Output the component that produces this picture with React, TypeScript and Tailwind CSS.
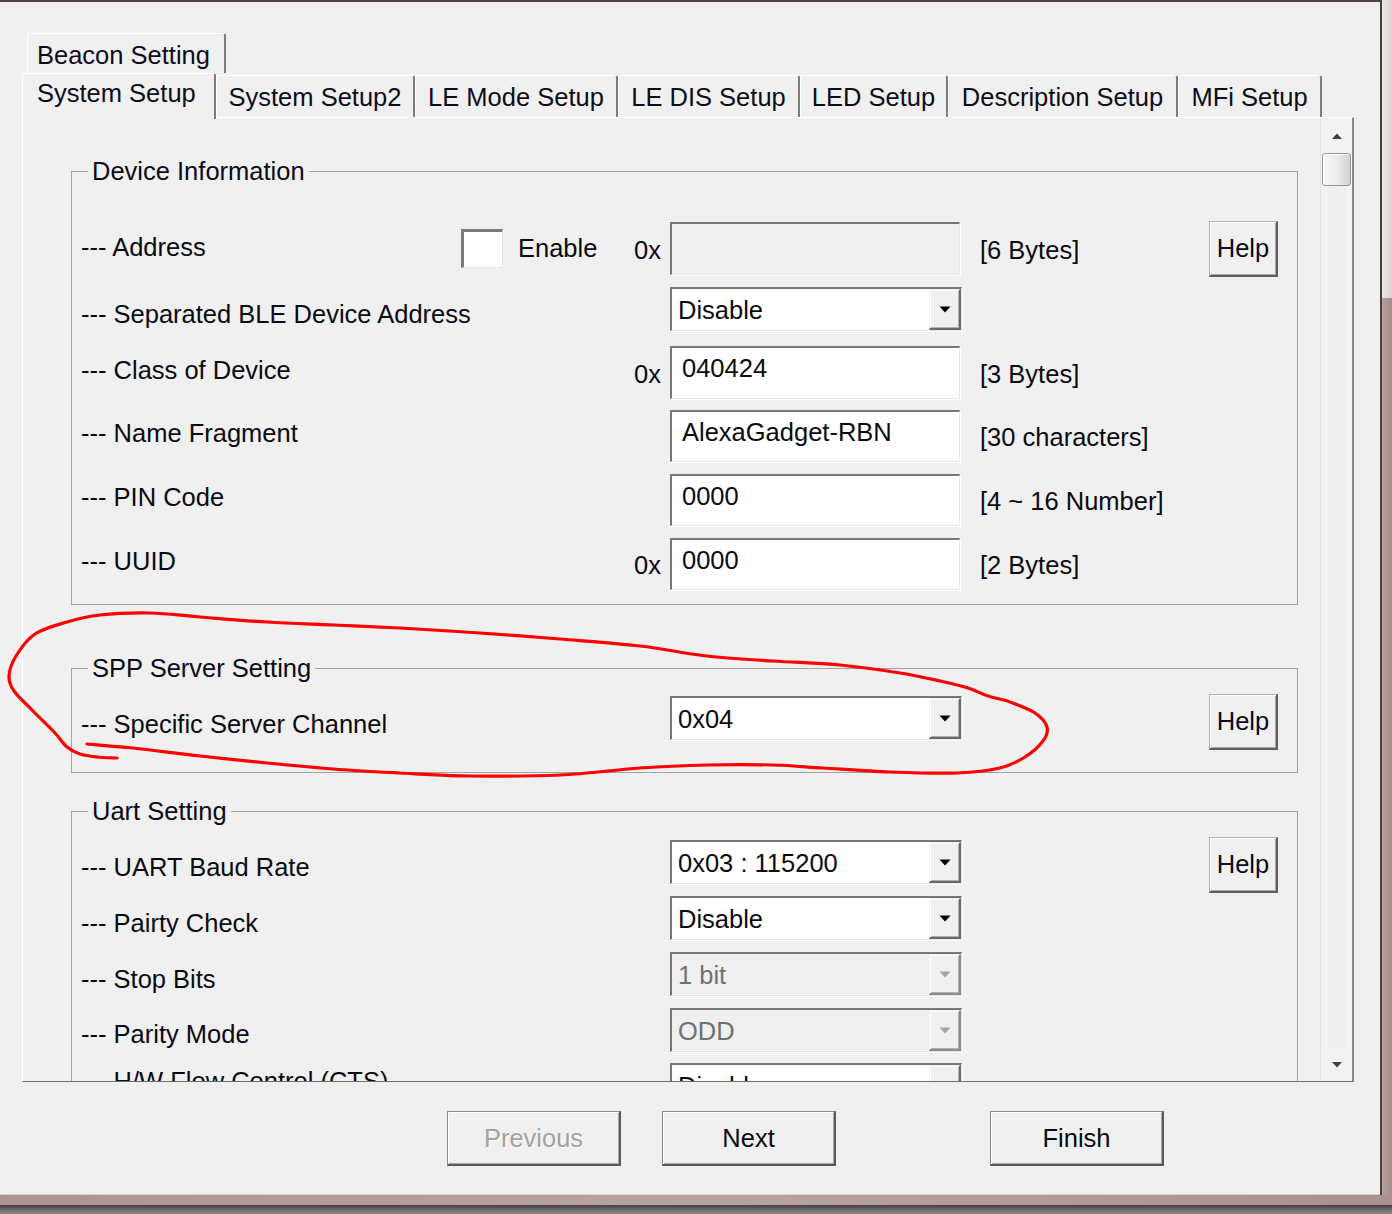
import React from "react";

const sunken =
  "border-t-2 border-l-2 border-b border-r border-t-[#767676] border-l-[#767676] border-b-[#e6e6e6] border-r-[#e6e6e6] shadow-[1px_1px_0_#ffffff]";

const raisedSmall =
  "bg-[#f0f0f0] border-t border-l border-b-2 border-r-2 border-t-[#b4b4b4] border-l-[#b4b4b4] border-b-[#5e5e5e] border-r-[#5e5e5e] shadow-[inset_1px_1px_0_#ffffff,inset_-1px_-1px_0_#a8a8a8]";

const raisedBig =
  "bg-[#f0f0f0] border-t border-l border-b-2 border-r-2 border-t-[#8c8c8c] border-l-[#8c8c8c] border-b-[#5a5a5a] border-r-[#5a5a5a] shadow-[inset_1px_1px_0_#ffffff,inset_-1px_-1px_0_#a8a8a8]";

function Arrow({ color }: { color: string }) {
  return (
    <svg width="12" height="7" viewBox="0 0 12 7">
      <path d="M0.5 0.5 H11.5 L6 6.5 Z" fill={color} />
    </svg>
  );
}

function Dropdown({ value, disabled }: { value: string; disabled?: boolean }) {
  return (
    <div
      className={`flex h-[44px] w-[292px] ${sunken} ${disabled ? "bg-[#f0f0f0]" : "bg-white"}`}
    >
      <div
        className={`flex-1 flex items-center pl-[6px] leading-[30px] whitespace-nowrap ${
          disabled ? "text-[#707070]" : "text-[#0a0a10]"
        }`}
      >
        {value}
      </div>
      <div
        className={`w-[32px] h-full flex items-center justify-center border-t border-l border-b-2 border-r-2 border-t-[#f0f0f0] border-l-[#f0f0f0] ${
          disabled
            ? "bg-[#f0f0f0] border-b-[#8a8a8a] border-r-[#8a8a8a]"
            : "bg-[#f0f0f0] border-b-[#6a6a6a] border-r-[#6a6a6a]"
        } shadow-[inset_1px_1px_0_#ffffff,inset_-1px_-1px_0_#b0b0b0]`}
      >
        <Arrow color={disabled ? "#a3a3a3" : "#000000"} />
      </div>
    </div>
  );
}

function TextBox({ value, disabled }: { value?: string; disabled?: boolean }) {
  return (
    <div
      className={`w-[290px] h-full ${sunken} ${
        disabled ? "bg-[#f0f0f0]" : "bg-white"
      } pl-[10px] pt-[5px] leading-[30px] text-[#0a0a10] whitespace-nowrap`}
    >
      {value}
    </div>
  );
}

function HelpButton() {
  return (
    <div
      className={`w-[69px] h-[56px] flex items-center justify-center ${raisedSmall} text-[#0a0a18]`}
    >
      Help
    </div>
  );
}

function Group({
  title,
  className,
  children,
}: {
  title: string;
  className: string;
  children: React.ReactNode;
}) {
  return (
    <fieldset className={`ml-[48px] w-[1227px] shrink-0 border border-[#a3a3a3] ${className}`}>
      <legend className="ml-[16px] px-[4px] leading-[30px] text-[#0a0a18]">{title}</legend>
      {children}
    </fieldset>
  );
}

const tabBase =
  "flex items-center justify-center bg-[#f0f0f0] border-t border-l border-r-2 border-t-white border-l-white border-r-[#7c7c7c] rounded-t-[3px] text-[#0c0c1a] leading-[30px] whitespace-nowrap";

const tabs: { label: string; w: string }[] = [
  { label: "System Setup2", w: "w-[199px]" },
  { label: "LE Mode Setup", w: "w-[203px]" },
  { label: "LE DIS Setup", w: "w-[182px]" },
  { label: "LED Setup", w: "w-[148px]" },
  { label: "Description Setup", w: "w-[230px]" },
  { label: "MFi Setup", w: "w-[144px]" },
];

const redPts: [number, number][] = [
  [87, 744], [133, 748], [200, 756], [267, 763], [333, 769], [400, 773], [470, 776],
  [560, 775], [640, 768], [707, 765], [773, 765], [823, 768], [890, 772], [957, 773],
  [1000, 768], [1025, 757], [1043, 741], [1047, 727], [1035, 713], [1010, 702],
  [988, 696], [968, 688], [940, 681], [900, 673], [840, 665], [773, 661], [707, 656],
  [640, 646], [560, 639], [480, 633], [400, 628], [333, 625], [267, 622], [200, 617],
  [150, 613], [100, 615], [67, 622], [35, 634], [16, 656], [9, 676], [14, 691],
  [33, 711], [55, 733], [67, 747], [80, 754], [97, 757], [117, 758],
];

function smoothPath(p: [number, number][]) {
  const f = (n: number) => n.toFixed(1);
  let d = `M${f(p[0][0])} ${f(p[0][1])}`;
  for (let i = 0; i < p.length - 1; i++) {
    const p0 = p[i - 1] || p[i];
    const p1 = p[i];
    const p2 = p[i + 1];
    const p3 = p[i + 2] || p2;
    const c1x = p1[0] + (p2[0] - p0[0]) / 6;
    const c1y = p1[1] + (p2[1] - p0[1]) / 6;
    const c2x = p2[0] - (p3[0] - p1[0]) / 6;
    const c2y = p2[1] - (p3[1] - p1[1]) / 6;
    d += ` C${f(c1x)} ${f(c1y)} ${f(c2x)} ${f(c2y)} ${f(p2[0])} ${f(p2[1])}`;
  }
  return d;
}

export default function App() {
  return (
    <div className="relative w-[1392px] h-[1214px] overflow-hidden flex flex-col bg-[#5a5a5a] font-['Liberation_Sans',Arial,sans-serif] text-[25.5px] text-[#0a0a10]">
      <div className="flex h-[1195px] shrink-0">
        {/* window */}
        <div className="w-[1380px] h-full bg-[#f0f0f0] flex flex-col border-b border-b-[#d9d2d0]">
          <div className="h-[2px] bg-[#4d4444] shrink-0" />

          {/* tab row 1 */}
          <div className="flex pl-[27px] pt-[31px] shrink-0">
            <div className={`${tabBase} w-[199px] h-[40px] pt-[3px] !justify-start pl-[9px]`}>Beacon Setting</div>
          </div>

          {/* tab row 2 */}
          <div className="relative z-10 flex items-end pl-[22px] h-[46px] -mb-[2px] shrink-0">
            <div
              className={`flex items-start justify-start bg-[#f0f0f0] border-t border-l border-r-2 border-t-white border-l-white border-r-[#7c7c7c] rounded-t-[3px] text-[#0c0c1a] leading-[30px] whitespace-nowrap w-[194px] h-[46px] pl-[14px] pt-[4px]`}
            >
              System Setup
            </div>
            {tabs.map((t) => (
              <div key={t.label} className={`${tabBase} ${t.w} h-[42px] mb-[2px]`}>
                {t.label}
              </div>
            ))}
          </div>

          {/* panel */}
          <div className="ml-[22px] w-[1332px] h-[965px] shrink-0 flex border-t border-l border-r-2 border-b border-t-white border-l-white border-r-[#8a8a8a] border-b-[#6c6c6c]">
            <div className="w-[1297px] h-[963px] overflow-hidden flex flex-col">
              {/* Device Information */}
              <Group title="Device Information" className="mt-[38px] pb-[14px]">
                <div className="flex items-start h-[56px] mt-[35px] pl-[9px]">
                  <div className="w-[553px] flex items-start">
                    <div className="w-[380px] mt-[11px] leading-[30px] whitespace-nowrap">--- Address</div>
                    <div className={`w-[42px] h-[39px] mt-[8px] bg-white border-t-[3px] border-l-[3px] border-b border-r border-t-[#7a7a7a] border-l-[#7a7a7a] border-b-[#e3e3e3] border-r-[#e3e3e3]`} />
                    <div className="ml-[15px] mt-[12px] leading-[30px]">Enable</div>
                  </div>
                  <div className="w-[36px] mt-[14px] leading-[30px]">0x</div>
                  <div className="w-[292px] h-[53px] mt-[1px]">
                    <TextBox disabled />
                  </div>
                  <div className="w-[247px] pl-[18px] mt-[14px] leading-[30px]">[6 Bytes]</div>
                  <HelpButton />
                </div>

                <div className="flex items-start h-[44px] mt-[10px] pl-[9px]">
                  <div className="w-[553px] mt-[12px] leading-[30px] whitespace-nowrap">
                    --- Separated BLE Device Address
                  </div>
                  <div className="w-[36px]" />
                  <Dropdown value="Disable" />
                </div>

                <div className="flex items-start h-[53px] mt-[15px] pl-[9px]">
                  <div className="w-[553px] mt-[9px] leading-[30px] whitespace-nowrap">--- Class of Device</div>
                  <div className="w-[36px] mt-[13px] leading-[30px]">0x</div>
                  <div className="w-[292px] h-[53px]">
                    <TextBox value="040424" />
                  </div>
                  <div className="w-[247px] pl-[18px] mt-[13px] leading-[30px]">[3 Bytes]</div>
                </div>

                <div className="flex items-start h-[52px] mt-[11px] pl-[9px]">
                  <div className="w-[553px] mt-[8px] leading-[30px] whitespace-nowrap">--- Name Fragment</div>
                  <div className="w-[36px]" />
                  <div className="w-[292px] h-[52px]">
                    <TextBox value="AlexaGadget-RBN" />
                  </div>
                  <div className="w-[247px] pl-[18px] mt-[12px] leading-[30px] whitespace-nowrap">[30 characters]</div>
                </div>

                <div className="flex items-start h-[52px] mt-[12px] pl-[9px]">
                  <div className="w-[553px] mt-[8px] leading-[30px] whitespace-nowrap">--- PIN Code</div>
                  <div className="w-[36px]" />
                  <div className="w-[292px] h-[52px]">
                    <TextBox value="0000" />
                  </div>
                  <div className="w-[247px] pl-[18px] mt-[12px] leading-[30px] whitespace-nowrap">[4 ~ 16 Number]</div>
                </div>

                <div className="flex items-start h-[52px] mt-[12px] pl-[9px]">
                  <div className="w-[553px] mt-[8px] leading-[30px] whitespace-nowrap">--- UUID</div>
                  <div className="w-[36px] mt-[12px] leading-[30px]">0x</div>
                  <div className="w-[292px] h-[52px]">
                    <TextBox value="0000" />
                  </div>
                  <div className="w-[247px] pl-[18px] mt-[12px] leading-[30px]">[2 Bytes]</div>
                </div>
              </Group>

              {/* SPP Server Setting */}
              <Group title="SPP Server Setting" className="mt-[48px] pb-[22px]">
                <div className="flex items-start h-[56px] mt-[11px] pl-[9px]">
                  <div className="w-[553px] mt-[15px] leading-[30px] whitespace-nowrap">
                    --- Specific Server Channel
                  </div>
                  <div className="w-[36px]" />
                  <div className="w-[292px] mt-[2px]">
                    <Dropdown value="0x04" />
                  </div>
                  <div className="w-[247px]" />
                  <HelpButton />
                </div>
              </Group>

              {/* Uart Setting */}
              <Group title="Uart Setting" className="mt-[23px] pb-[20px]">
                <div className="flex items-start h-[56px] mt-[11px] pl-[9px]">
                  <div className="w-[553px] mt-[15px] leading-[30px] whitespace-nowrap">--- UART Baud Rate</div>
                  <div className="w-[36px]" />
                  <div className="w-[292px] mt-[3px]">
                    <Dropdown value="0x03 : 115200" />
                  </div>
                  <div className="w-[247px]" />
                  <HelpButton />
                </div>
                <div className="flex items-start h-[44px] mt-[3px] pl-[9px]">
                  <div className="w-[553px] mt-[12px] leading-[30px] whitespace-nowrap">--- Pairty Check</div>
                  <div className="w-[36px]" />
                  <Dropdown value="Disable" />
                </div>
                <div className="flex items-start h-[44px] mt-[12px] pl-[9px]">
                  <div className="w-[553px] mt-[12px] leading-[30px] whitespace-nowrap">--- Stop Bits</div>
                  <div className="w-[36px]" />
                  <Dropdown value="1 bit" disabled />
                </div>
                <div className="flex items-start h-[44px] mt-[12px] pl-[9px]">
                  <div className="w-[553px] mt-[11px] leading-[30px] whitespace-nowrap">--- Parity Mode</div>
                  <div className="w-[36px]" />
                  <Dropdown value="ODD" disabled />
                </div>
                <div className="flex items-start h-[44px] mt-[11px] pl-[9px]">
                  <div className="w-[553px] mt-[3px] leading-[30px] whitespace-nowrap">--- H/W Flow Control (CTS)</div>
                  <div className="w-[36px]" />
                  <Dropdown value="Disable" />
                </div>
              </Group>
            </div>

            {/* scrollbar */}
            <div className="w-[32px] h-[963px] flex flex-col bg-[#f2f2f2] border-l border-l-[#e2e2e2]">
              <div className="h-[35px] flex items-center justify-center shrink-0">
                <svg width="10" height="6" viewBox="0 0 10 6">
                  <path d="M0 6 L5 0.5 L10 6 Z" fill="#404040" />
                </svg>
              </div>
              <div className="mx-[1px] h-[33px] shrink-0 rounded-[3px] border border-[#979797] bg-gradient-to-r from-[#f7f7f7] via-[#ececec] to-[#d2d2d2] shadow-[inset_1px_1px_0_#ffffff]" />
              <div className="flex-1 flex justify-center">
                <div className="w-[22px] h-full border-l border-r border-[#f8f8f8] bg-[#efefef]" />
              </div>
              <div className="h-[32px] flex items-center justify-center shrink-0">
                <svg width="10" height="6" viewBox="0 0 10 6">
                  <path d="M0 0 L10 0 L5 5.5 Z" fill="#404040" />
                </svg>
              </div>
            </div>
          </div>

          {/* bottom buttons */}
          <div className="flex pl-[447px] mt-[29px] shrink-0">
            <div
              className={`w-[174px] h-[55px] flex items-center justify-center ${raisedBig} text-[#a2a2a2] [text-shadow:1px_1px_0_#ffffff]`}
            >
              Previous
            </div>
            <div className={`ml-[41px] w-[174px] h-[55px] flex items-center justify-center ${raisedBig}`}>
              Next
            </div>
            <div className={`ml-[154px] w-[174px] h-[55px] flex items-center justify-center ${raisedBig}`}>
              Finish
            </div>
          </div>
        </div>

        {/* right frame */}
        <div className="w-[2px] h-full bg-[#4a3f3f]" />
        <div className="flex-1 h-full flex flex-col">
          <div className="h-[298px] bg-gradient-to-r from-[#ebe6e6] to-[#ddd3d2]" />
          <div className="flex-1 bg-gradient-to-r from-[#b7a19c] to-[#a38e89]" />
        </div>
      </div>

      {/* bottom frame */}
      <div className="h-[10px] shrink-0 bg-gradient-to-r from-[#ad9690] via-[#b9a39e] to-[#aa938d]" />
      <div className="flex-1 bg-gradient-to-b from-[#3e3e3e] via-[#6a6a6a] to-[#8c8c8c]" />

      {/* red annotation */}
      <svg
        className="absolute left-0 top-0 pointer-events-none"
        width="1392"
        height="1214"
        viewBox="0 0 1392 1214"
      >
        <path
          d={smoothPath(redPts)}
          fill="none"
          stroke="#ff0000"
          strokeWidth="3.2"
          strokeLinecap="round"
          strokeLinejoin="round"
        />
      </svg>
    </div>
  );
}
